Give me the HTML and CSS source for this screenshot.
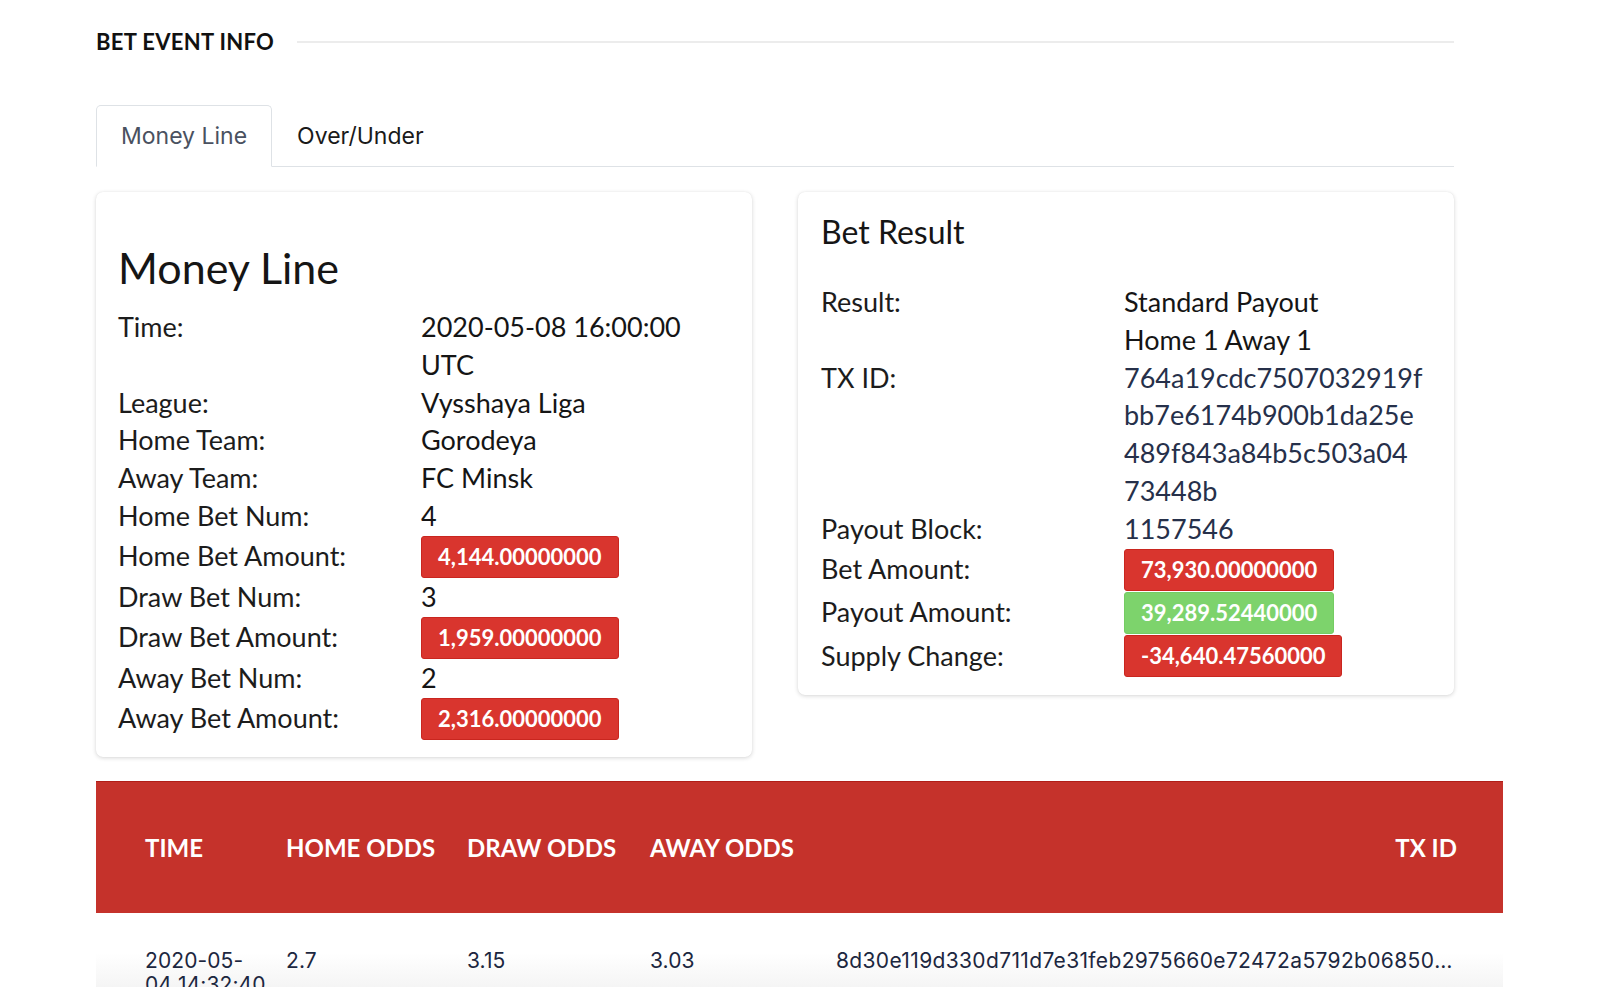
FILE: index.html
```html
<!DOCTYPE html>
<html lang="en">
<head>
<meta charset="utf-8">
<title>Bet Event Info</title>
<link rel="stylesheet" href="styles.css">
</head>
<body>
<div class="page">
  <div class="section-title">
    <h2>BET EVENT INFO</h2>
    <div class="rule"></div>
  </div>

  <div class="tabs">
    <div class="tab active">Money Line</div>
    <div class="tab">Over/Under</div>
  </div>

  <div class="cards">
    <div class="card card-left">
      <h3 class="card-title big">Money Line</h3>
      <div class="row"><div class="label">Time:</div><div class="value">2020-05-08 16:00:00 UTC</div></div>
      <div class="row"><div class="label">League:</div><div class="value">Vysshaya Liga</div></div>
      <div class="row"><div class="label">Home Team:</div><div class="value">Gorodeya</div></div>
      <div class="row"><div class="label">Away Team:</div><div class="value">FC Minsk</div></div>
      <div class="row"><div class="label">Home Bet Num:</div><div class="value">4</div></div>
      <div class="row badge-row"><div class="label">Home Bet Amount:</div><div class="value"><span class="badge red">4,144.00000000</span></div></div>
      <div class="row"><div class="label">Draw Bet Num:</div><div class="value">3</div></div>
      <div class="row badge-row"><div class="label">Draw Bet Amount:</div><div class="value"><span class="badge red">1,959.00000000</span></div></div>
      <div class="row"><div class="label">Away Bet Num:</div><div class="value">2</div></div>
      <div class="row badge-row"><div class="label">Away Bet Amount:</div><div class="value"><span class="badge red">2,316.00000000</span></div></div>
    </div>

    <div class="card card-right">
      <h3 class="card-title">Bet Result</h3>
      <div class="row"><div class="label">Result:</div><div class="value"><div>Standard Payout</div><div>Home 1 Away 1</div></div></div>
      <div class="row"><div class="label">TX ID:</div><div class="value hash"><span class="hl">764a19cdc7507032919f</span><span class="hl">bb7e6174b900b1da25e</span><span class="hl">489f843a84b5c503a04</span><span class="hl">73448b</span></div></div>
      <div class="row"><div class="label">Payout Block:</div><div class="value hash">1157546</div></div>
      <div class="row badge-row"><div class="label">Bet Amount:</div><div class="value"><span class="badge red">73,930.00000000</span></div></div>
      <div class="row badge-row"><div class="label">Payout Amount:</div><div class="value"><span class="badge green">39,289.52440000</span></div></div>
      <div class="row badge-row"><div class="label">Supply Change:</div><div class="value"><span class="badge red">-34,640.47560000</span></div></div>
    </div>
  </div>

  <table class="odds">
    <colgroup>
      <col class="c-time">
      <col class="c-home">
      <col class="c-draw">
      <col class="c-away">
      <col class="c-tx">
    </colgroup>
    <thead>
      <tr>
        <th class="first">TIME</th>
        <th>HOME ODDS</th>
        <th>DRAW ODDS</th>
        <th>AWAY ODDS</th>
        <th class="last">TX ID</th>
      </tr>
    </thead>
    <tbody>
      <tr>
        <td class="first">2020-05-04&nbsp;14:32:40</td>
        <td>2.7</td>
        <td>3.15</td>
        <td>3.03</td>
        <td class="last tx">8d30e119d330d711d7e31feb2975660e72472a5792b06850c2a7e4d1f03b9a61</td>
      </tr>
    </tbody>
  </table>
</div>
</body>
</html>
```

FILE: styles.css
```css
html, body {
  margin: 0;
  padding: 0;
  background: #ffffff;
}

body {
  font-family: "Lato", "Liberation Sans", sans-serif;
  color: #1e1e1e;
  overflow: hidden;
}

.page {
  padding: 29px 0 0 96px;
  width: 1358px;
}

/* Section title */
.section-title {
  display: flex;
  align-items: center;
  gap: 23px;
}

.section-title h2 {
  margin: 0;
  font-family: "Lato", sans-serif;
  font-weight: 700;
  font-size: 22px;
  line-height: 26px;
  letter-spacing: 0.3px;
  color: #111111;
}

.section-title .rule {
  flex: 1;
  height: 2px;
  background: #ececec;
}

/* Tabs */
.tabs {
  margin-top: 50px;
  display: flex;
  border-bottom: 1px solid #dee2e6;
}

.tab {
  height: 60px;
  padding: 0 24px;
  display: flex;
  align-items: center;
  border: 1px solid transparent;
  border-top-left-radius: 5px;
  border-top-right-radius: 5px;
  margin-bottom: -1px;
  font-family: "Inter", "Liberation Sans", sans-serif;
  font-size: 23px;
  color: #1a1a1a;
}

.tab.active {
  border-color: #dee2e6 #dee2e6 #ffffff;
  background: #ffffff;
  color: #4a5160;
}

/* Cards */
.cards {
  margin-top: 25px;
  display: flex;
  align-items: flex-start;
  gap: 46px;
}

.card {
  width: 656px;
  box-sizing: border-box;
  background: #ffffff;
  border-radius: 7px;
  box-shadow: 0 1px 4px rgba(0, 0, 0, 0.16), 0 0 1px rgba(0, 0, 0, 0.08);
  padding: 16px 22px 17px 22px;
}

.card-right {
  padding: 20px 28px 18px 23px;
}

.card-title {
  margin: 0 0 31px 0;
  font-weight: 400;
  font-size: 32px;
  line-height: 40px;
  color: #151515;
}

.card-title.big {
  margin: 33px 0 14px 0;
  font-size: 43px;
  line-height: 53px;
}

.row {
  display: grid;
  grid-template-columns: 303px 1fr;
  align-items: start;
  font-size: 27px;
  line-height: 37.8px;
}

.label {
  color: #1c1c1c;
}

.value {
  color: #151515;
}

.value.hash {
  color: #26304a;
  word-break: break-all;
}

.hl {
  display: block;
}

.badge-row {
  align-items: center;
  min-height: 43px;
}

.badge {
  display: inline-flex;
  align-items: center;
  height: 42px;
  box-sizing: border-box;
  padding: 0 16px;
  border-radius: 3px;
  font-weight: 700;
  font-size: 22px;
  color: #ffffff;
  vertical-align: middle;
}

.badge.red {
  background: #d9352e;
  border: 1px solid #c9261f;
}

.badge.green {
  background: #7dd36c;
  border: 1px solid #74cc63;
}

/* Odds table */
.odds {
  margin-top: 24px;
  width: 1407px;
  table-layout: fixed;
  border-collapse: collapse;
  border-spacing: 0;
}

.c-time { width: 174px; }
.c-home { width: 181px; }
.c-draw { width: 183px; }
.c-away { width: 186px; }
.c-tx { width: 683px; }

.odds thead tr {
  background: #c5322b;
  border-top: 1px solid #b01e18;
}

.odds th {
  height: 131px;
  padding: 0 0 0 16px;
  text-align: left;
  font-family: "Lato", sans-serif;
  font-weight: 700;
  font-size: 24px;
  color: #ffffff;
  white-space: nowrap;
}

.odds th.first,
.odds td.first {
  padding-left: 49px;
  padding-right: 16px;
}

.odds th.last {
  text-align: right;
  padding-right: 46px;
}

.odds tbody tr {
  background: linear-gradient(to bottom, #ffffff 0, #ffffff 40px, #f3f3f3 80px);
}

.odds td {
  padding: 36px 0 20px 16px;
  vertical-align: top;
  font-family: "Inter", "Liberation Sans", sans-serif;
  font-size: 21px;
  line-height: 24px;
  letter-spacing: 0.1px;
  color: #1c2740;
}

.odds td.tx {
  padding-right: 46px;
  letter-spacing: 0.35px;
  white-space: nowrap;
  overflow: hidden;
  text-overflow: ellipsis;
}
```
